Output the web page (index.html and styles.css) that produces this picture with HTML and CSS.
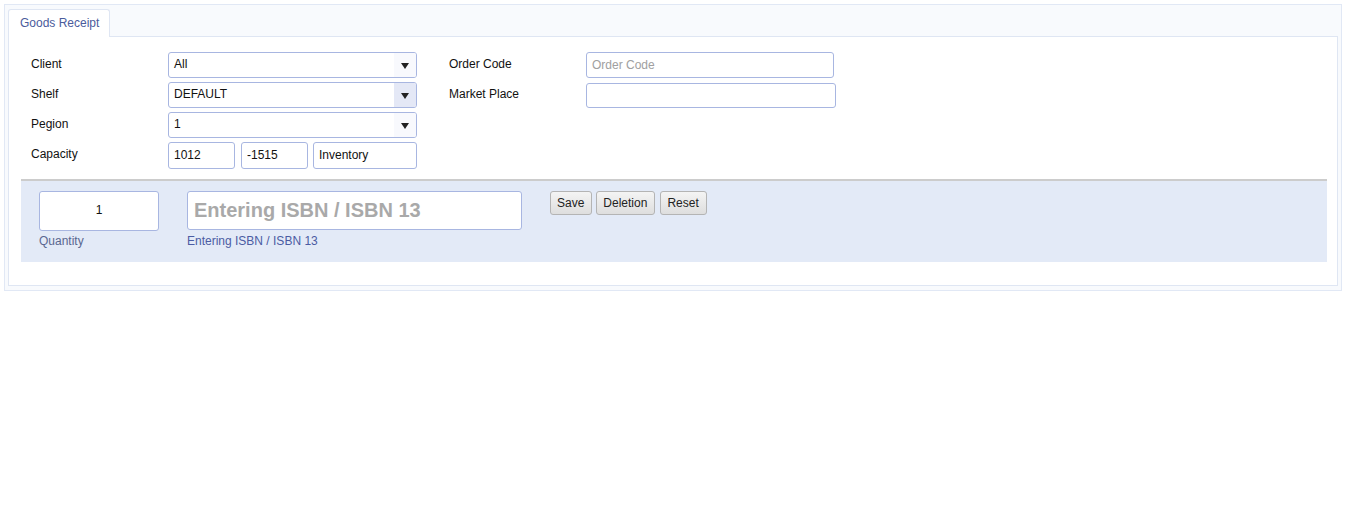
FILE: index.html
```html
<!DOCTYPE html>
<html>
<head>
<meta charset="utf-8">
<link rel="stylesheet" href="styles.css">
</head>
<body>
<div class="frame">
  <div class="tabs">
    <div class="tab">Goods Receipt</div>
  </div>
  <div class="panel">
    <div class="form">
      <div class="col col-left">
        <div class="row">
          <div class="lbl">Client</div>
          <div class="sel"><span class="sel-text">All</span><span class="sel-arrow"><span class="tri"></span></span></div>
        </div>
        <div class="row">
          <div class="lbl">Shelf</div>
          <div class="sel"><span class="sel-text">DEFAULT</span><span class="sel-arrow active"><span class="tri"></span></span></div>
        </div>
        <div class="row">
          <div class="lbl">Pegion</div>
          <div class="sel"><span class="sel-text">1</span><span class="sel-arrow"><span class="tri"></span></span></div>
        </div>
        <div class="row row-cap">
          <div class="lbl">Capacity</div>
          <div class="caps">
            <input class="inp cap-a" type="text" value="1012">
            <input class="inp cap-b" type="text" value="-1515">
            <input class="inp cap-c" type="text" value="Inventory">
          </div>
        </div>
      </div>
      <div class="col col-right">
        <div class="row">
          <div class="lbl">Order Code</div>
          <input class="inp wide" type="text" placeholder="Order Code">
        </div>
        <div class="row row-mp">
          <div class="lbl">Market Place</div>
          <input class="inp wide2" type="text">
        </div>
      </div>
    </div>
    <div class="entry">
      <div class="field">
        <input class="inp qty" type="text" value="1">
        <div class="hint hint-q">Quantity</div>
      </div>
      <div class="field">
        <input class="inp isbn" type="text" placeholder="Entering ISBN / ISBN 13">
        <div class="hint">Entering ISBN / ISBN 13</div>
      </div>
      <div class="btns">
        <button class="btn">Save</button>
        <button class="btn">Deletion</button>
        <button class="btn">Reset</button>
      </div>
    </div>
  </div>
</div>
</body>
</html>
```

FILE: styles.css
```css
html, body {
  margin: 0;
  padding: 0;
  background: #ffffff;
}
body {
  font-family: "Liberation Sans", Arial, sans-serif;
  font-size: 12px;
  color: #111;
}
.frame {
  margin: 4px 5px 0 4px;
  border: 1px solid #e1e8f5;
  background: #f8fafd;
  padding: 4px 3px 4px 3px;
}
.tabs {
  display: flex;
  position: relative;
  z-index: 1;
  margin-bottom: -1px;
}
.tab {
  width: 102px;
  height: 28px;
  box-sizing: border-box;
  padding: 6px 0 0 11px;
  background: #ffffff;
  border: 1px solid #dfe6f3;
  border-bottom: none;
  border-radius: 3px 3px 0 0;
  color: #4b5b9c;
  font-size: 12px;
  line-height: 14px;
  white-space: nowrap;
}
.panel {
  background: #ffffff;
  border: 1px solid #dfe6f3;
  padding: 15px 10px 23px 12px;
}
.form {
  display: flex;
  padding-left: 10px;
  height: 117px;
}
.col {
  display: flex;
  flex-direction: column;
  gap: 4px;
}
.col-left {
  width: 386px;
}
.col-right {
  margin-left: 32px;
}
.row {
  display: flex;
  align-items: center;
  height: 26px;
}
.row-cap {
  height: 27px;
}
.row-mp {
  margin-top: 1px;
  height: 25px;
}
.lbl {
  width: 137px;
  flex: none;
  font-size: 12px;
  line-height: 14px;
  color: #111;
  margin-top: -3px;
}
.sel {
  display: flex;
  width: 249px;
  height: 26px;
  box-sizing: border-box;
  border: 1px solid #a8b6e1;
  border-radius: 3px;
  background: #ffffff;
  overflow: hidden;
}
.sel-text {
  flex: 1;
  padding: 4px 0 0 5px;
  line-height: 14px;
  color: #111;
}
.sel-arrow {
  width: 22px;
  display: flex;
  align-items: center;
  justify-content: center;
  background: #f8f9fd;
}
.sel-arrow.active {
  background: #e4e8f6;
}
.tri {
  width: 0;
  height: 0;
  border-left: 4px solid transparent;
  border-right: 4px solid transparent;
  border-top: 6px solid #222;
  margin-top: 2px;
}
.inp {
  box-sizing: border-box;
  border: 1px solid #a8b6e1;
  border-radius: 3px;
  background: #ffffff;
  font-family: "Liberation Sans", Arial, sans-serif;
  font-size: 12px;
  color: #111;
  padding: 0 5px;
  outline: none;
  margin: 0;
}
.inp::placeholder {
  color: #a0a0a0;
}
.caps {
  display: flex;
}
.cap-a {
  width: 67px;
  height: 27px;
  padding-bottom: 2px;
}
.cap-b {
  width: 67px;
  height: 27px;
  margin-left: 6px;
  padding-bottom: 2px;
}
.cap-c {
  width: 104px;
  height: 27px;
  margin-left: 5px;
  padding-bottom: 2px;
}
.wide {
  width: 248px;
  height: 26px;
}
.wide2 {
  width: 250px;
  height: 25px;
}
.entry {
  margin-top: 10px;
  border-top: 2px solid #cccccc;
  background: #e3eaf7;
  display: flex;
  align-items: flex-start;
  padding: 10px 0 0 18px;
  box-sizing: border-box;
  height: 83px;
}
.field {
  display: flex;
  flex-direction: column;
  margin-right: 28px;
}
.qty {
  width: 120px;
  height: 40px;
  text-align: center;
  padding-bottom: 2px;
}
.isbn {
  width: 335px;
  height: 39px;
  font-size: 20px;
  font-weight: bold;
  padding: 0 6px;
}
.isbn::placeholder {
  color: #a9a9a9;
}
.hint {
  margin-top: 4px;
  font-size: 12px;
  line-height: 14px;
  color: #4b5ca3;
}
.hint-q {
  margin-top: 3px;
  color: #5a6790;
}
.btns {
  display: flex;
  gap: 4px;
}
.btn {
  height: 24px;
  box-sizing: border-box;
  padding: 0 7px 0 6px;
  border: 1px solid #b4b4b4;
  border-radius: 3px;
  background: linear-gradient(#f4f4f4, #dedede);
  font-family: "Liberation Sans", Arial, sans-serif;
  font-size: 12px;
  color: #222;
  cursor: pointer;
}
.btn + .btn + .btn {
  margin-left: 1px;
}
```
